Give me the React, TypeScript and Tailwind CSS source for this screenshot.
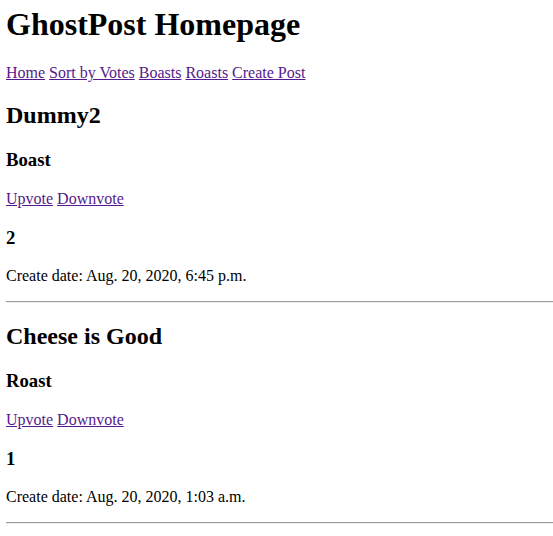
const posts = [
  { title: 'Dummy2', kind: 'Boast', votes: 2, date: 'Aug. 20, 2020, 6:45 p.m.' },
  { title: 'Cheese is Good', kind: 'Roast', votes: 1, date: 'Aug. 20, 2020, 1:03 a.m.' },
];

const navLinks = ['Home', 'Sort by Votes', 'Boasts', 'Roasts', 'Create Post'];

function Link({ children }: { children: string }) {
  return (
    <a href="#" className="text-[#551a8b] underline">
      {children}
    </a>
  );
}

export default function App() {
  return (
    <div className="pl-[6px] pt-[6px] bg-white text-black text-[16px] leading-[normal] font-['Liberation_Serif',serif] min-h-[536px] overflow-hidden">
      <h1 className="text-[32px] font-bold mb-[21.44px]">GhostPost Homepage</h1>
      <p className="my-[16px]">
        {navLinks.map((l, i) => (
          <span key={l}>
            <Link>{l}</Link>
            {i < navLinks.length - 1 ? ' ' : ''}
          </span>
        ))}
      </p>

      {posts.map((post) => (
        <div key={post.title}>
          <h2 className="text-[24px] font-bold my-[19.92px]">{post.title}</h2>
          <h3 className="text-[18.72px] font-bold my-[18.72px]">{post.kind}</h3>
          <p className="my-[16px]">
            <Link>Upvote</Link> <Link>Downvote</Link>
          </p>
          <h3 className="text-[18.72px] font-bold my-[18.72px]">{post.votes}</h3>
          <p className="my-[16px]">Create date: {post.date}</p>
          <hr className="my-[8px] border-t border-b border-t-[#9a9a9a] border-b-[#eeeeee]" />
        </div>
      ))}
    </div>
  );
}
